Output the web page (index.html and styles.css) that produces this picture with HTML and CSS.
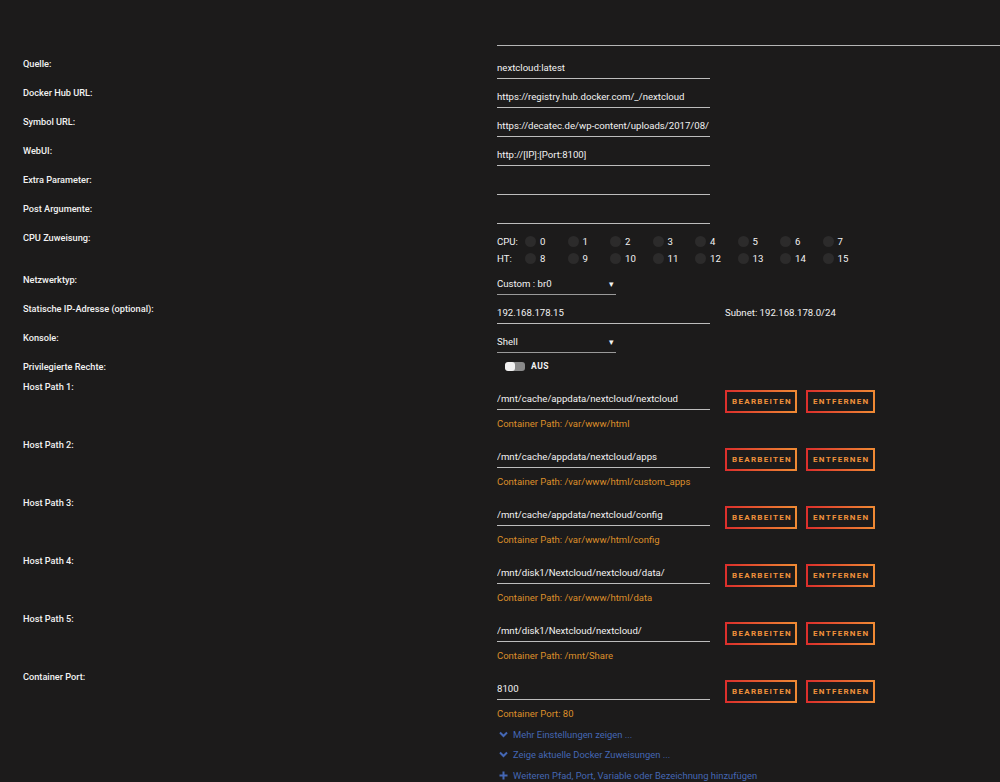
FILE: index.html
```html
<!DOCTYPE html>
<html>
<head>
  <title>Docker Container bearbeiten</title>
  <link rel="stylesheet" href="styles.css">
</head>
<body>
  <div class="form">
    <!-- end of the description field above -->
    <div class="head">
      <div></div>
      <div class="rule"></div>
    </div>

    <div class="row">
      <div class="label">Quelle:</div>
      <div class="value"><div class="field">nextcloud:latest</div></div>
    </div>
    <div class="row">
      <div class="label">Docker Hub URL:</div>
      <div class="value"><div class="field">https://registry.hub.docker.com/_/nextcloud</div></div>
    </div>
    <div class="row">
      <div class="label">Symbol URL:</div>
      <div class="value"><div class="field">https://decatec.de/wp-content/uploads/2017/08/</div></div>
    </div>
    <div class="row">
      <div class="label">WebUI:</div>
      <div class="value"><div class="field">http://[IP]:[Port:8100]</div></div>
    </div>
    <div class="row">
      <div class="label">Extra Parameter:</div>
      <div class="value"><div class="field"></div></div>
    </div>
    <div class="row">
      <div class="label">Post Argumente:</div>
      <div class="value"><div class="field"></div></div>
    </div>

    <!-- CPU pinning -->
    <div class="row cpu-row">
      <div class="label">CPU Zuweisung:</div>
      <div class="value">
        <div class="cpu-line">
          <span class="cpu-name">CPU:</span>
          <span class="core"><i class="dot"></i>0</span>
          <span class="core"><i class="dot"></i>1</span>
          <span class="core"><i class="dot"></i>2</span>
          <span class="core"><i class="dot"></i>3</span>
          <span class="core"><i class="dot"></i>4</span>
          <span class="core"><i class="dot"></i>5</span>
          <span class="core"><i class="dot"></i>6</span>
          <span class="core"><i class="dot"></i>7</span>
        </div>
        <div class="cpu-line">
          <span class="cpu-name">HT:</span>
          <span class="core"><i class="dot"></i>8</span>
          <span class="core"><i class="dot"></i>9</span>
          <span class="core"><i class="dot"></i>10</span>
          <span class="core"><i class="dot"></i>11</span>
          <span class="core"><i class="dot"></i>12</span>
          <span class="core"><i class="dot"></i>13</span>
          <span class="core"><i class="dot"></i>14</span>
          <span class="core"><i class="dot"></i>15</span>
        </div>
      </div>
    </div>

    <div class="row">
      <div class="label">Netzwerktyp:</div>
      <div class="value"><div class="field select"><span>Custom : br0</span><span class="caret">&#9662;</span></div></div>
    </div>
    <div class="row">
      <div class="label">Statische IP-Adresse (optional):</div>
      <div class="value inline">
        <div class="field">192.168.178.15</div>
        <span class="subnet">Subnet: 192.168.178.0/24</span>
      </div>
    </div>
    <div class="row">
      <div class="label">Konsole:</div>
      <div class="value"><div class="field select"><span>Shell</span><span class="caret">&#9662;</span></div></div>
    </div>
    <div class="row switch-row">
      <div class="label">Privilegierte Rechte:</div>
      <div class="value">
        <span class="switch"><span class="knob"></span></span>
        <span class="switch-text">AUS</span>
      </div>
    </div>

    <!-- mappings -->
    <div class="row path-row">
      <div class="label">Host Path 1:</div>
      <div class="value">
        <div class="path-line">
          <div class="field">/mnt/cache/appdata/nextcloud/nextcloud</div>
          <button class="btn">BEARBEITEN</button>
          <button class="btn">ENTFERNEN</button>
        </div>
        <div class="hint">Container Path: /var/www/html</div>
      </div>
    </div>
    <div class="row path-row">
      <div class="label">Host Path 2:</div>
      <div class="value">
        <div class="path-line">
          <div class="field">/mnt/cache/appdata/nextcloud/apps</div>
          <button class="btn">BEARBEITEN</button>
          <button class="btn">ENTFERNEN</button>
        </div>
        <div class="hint">Container Path: /var/www/html/custom_apps</div>
      </div>
    </div>
    <div class="row path-row">
      <div class="label">Host Path 3:</div>
      <div class="value">
        <div class="path-line">
          <div class="field">/mnt/cache/appdata/nextcloud/config</div>
          <button class="btn">BEARBEITEN</button>
          <button class="btn">ENTFERNEN</button>
        </div>
        <div class="hint">Container Path: /var/www/html/config</div>
      </div>
    </div>
    <div class="row path-row">
      <div class="label">Host Path 4:</div>
      <div class="value">
        <div class="path-line">
          <div class="field">/mnt/disk1/Nextcloud/nextcloud/data/</div>
          <button class="btn">BEARBEITEN</button>
          <button class="btn">ENTFERNEN</button>
        </div>
        <div class="hint">Container Path: /var/www/html/data</div>
      </div>
    </div>
    <div class="row path-row">
      <div class="label">Host Path 5:</div>
      <div class="value">
        <div class="path-line">
          <div class="field">/mnt/disk1/Nextcloud/nextcloud/</div>
          <button class="btn">BEARBEITEN</button>
          <button class="btn">ENTFERNEN</button>
        </div>
        <div class="hint">Container Path: /mnt/Share</div>
      </div>
    </div>
    <div class="row port-row">
      <div class="label">Container Port:</div>
      <div class="value">
        <div class="path-line">
          <div class="field">8100</div>
          <button class="btn">BEARBEITEN</button>
          <button class="btn">ENTFERNEN</button>
        </div>
        <div class="hint">Container Port: 80</div>
      </div>
    </div>

    <!-- extra options -->
    <div class="row links-row">
      <div></div>
      <div class="links">
        <a class="link" href="#">
          <svg width="9" height="7" viewBox="0 0 9 7"><path d="M1 1.5 L4.5 5 L8 1.5" fill="none" stroke="currentColor" stroke-width="2"/></svg>
          <span>Mehr Einstellungen zeigen ...</span>
        </a>
        <a class="link" href="#">
          <svg width="9" height="7" viewBox="0 0 9 7"><path d="M1 1.5 L4.5 5 L8 1.5" fill="none" stroke="currentColor" stroke-width="2"/></svg>
          <span>Zeige aktuelle Docker Zuweisungen ...</span>
        </a>
        <a class="link" href="#">
          <svg width="9" height="9" viewBox="0 0 9 9"><path d="M4.5 0.5 V8.5 M0.5 4.5 H8.5" fill="none" stroke="currentColor" stroke-width="2"/></svg>
          <span>Weiteren Pfad, Port, Variable oder Bezeichnung hinzufügen</span>
        </a>
      </div>
    </div>
  </div>
</body>
</html>
```

FILE: styles.css
```css
/* Global Styles */
body {
  background-color: #1c1b1b;
  margin: 0;
  color: #f2f2f2;
  font-family: Roboto, "Liberation Sans", sans-serif;
  font-size: 9.6px;
}
.form {
  width: 1000px;
}
.head {
  display: grid;
  grid-template-columns: 497px 1fr;
  height: 55px;
}
.head .rule {
  height: 45px;
  border-bottom: 1px solid #b5b5b5;
}
/* label / value rows */
.row {
  display: grid;
  grid-template-columns: 497px 1fr;
  height: 29px;
}
.label {
  padding-left: 23px;
  padding-top: 2px;
  line-height: 14px;
  font-size: 9.2px;
  font-weight: 500;
}
.value {
  line-height: 14px;
}
.value.inline {
  display: flex;
  align-items: flex-start;
}
.field {
  width: 213px;
  height: 18px;
  margin-top: 6px;
  box-sizing: border-box;
  border-bottom: 1px solid #bdbdbd;
  white-space: nowrap;
  overflow: hidden;
}
.field.select {
  width: 119px;
  display: flex;
  justify-content: space-between;
  padding-right: 2px;
  border-bottom-color: #9a9a9a;
}
.caret {
  font-size: 9px;
}
.subnet {
  margin-left: 15px;
  margin-top: 6px;
}
/* CPU pinning */
.cpu-row {
  height: 42px;
}
.cpu-row .value {
  padding-top: 4px;
}
.cpu-line {
  display: flex;
  align-items: center;
  height: 17px;
  font-size: 9.6px;
}
.cpu-name {
  width: 28px;
}
.core {
  display: flex;
  align-items: center;
  width: 42.5px;
}
.dot {
  width: 11px;
  height: 11px;
  border-radius: 50%;
  background-color: #2c2b2b;
  margin-right: 4px;
}
/* toggle */
.switch-row {
  height: 20px;
}
.switch-row .value {
  display: flex;
  align-items: center;
  height: 16px;
}
.switch {
  display: flex;
  width: 20px;
  height: 9px;
  margin-left: 8px;
  border-radius: 3px;
  background-color: #8a8a8a;
  overflow: hidden;
}
.knob {
  width: 10px;
  height: 9px;
  border-radius: 3px;
  background-color: #f2f2f2;
}
.switch-text {
  margin-left: 6px;
  font-size: 8.5px;
  font-weight: 700;
  letter-spacing: 0.5px;
}
/* path / port mappings */
.path-row,
.port-row {
  height: 58px;
}
.path-row .value,
.port-row .value {
  padding-top: 11px;
}
.port-row {
  height: 56px;
}
.path-line {
  display: flex;
  align-items: center;
  height: 24px;
}
.path-line .field {
  margin-top: 0;
}
.btn {
  height: 23px;
  box-sizing: border-box;
  margin-left: 15px;
  padding: 0 3px 0 5px;
  background: transparent;
  border: 2px solid;
  border-image: linear-gradient(90deg, #dc2f2c, #f08a34) 1;
  color: #f0913c;
  font-family: Roboto, "Liberation Sans", sans-serif;
  font-size: 8px;
  font-weight: 700;
  letter-spacing: 1.3px;
  cursor: pointer;
}
.btn + .btn {
  margin-left: 9px;
}
.hint {
  margin-top: 4px;
  color: #dd8f2a;
  font-size: 9.5px;
}
/* extra option links */
.links-row {
  height: 60px;
}
.link {
  display: flex;
  align-items: center;
  height: 20.5px;
  color: #4467b4;
  font-size: 9.4px;
  text-decoration: none;
}
.link svg {
  margin-left: 2px;
  margin-right: 5px;
}
```
